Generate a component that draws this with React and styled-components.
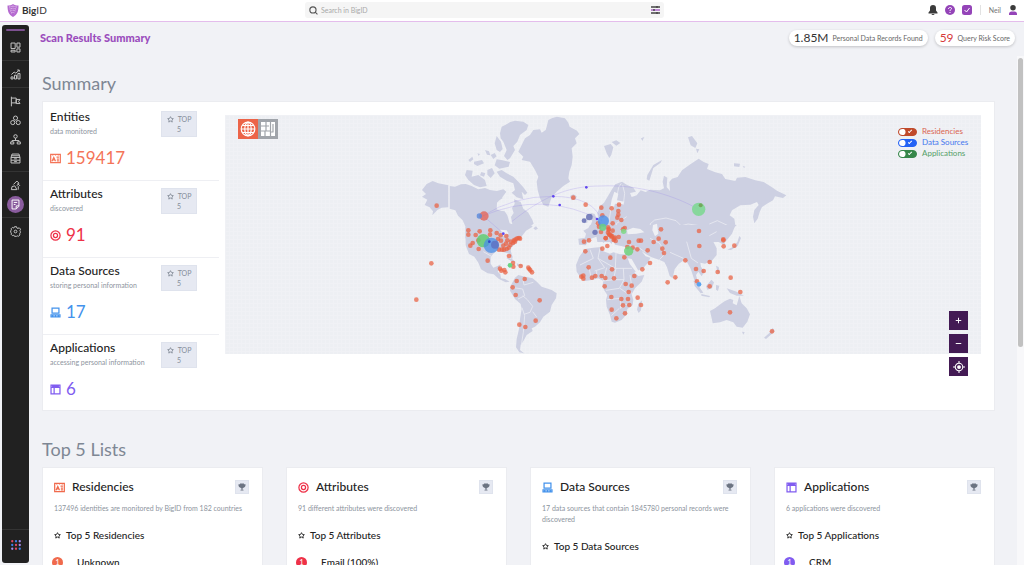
import React, { useState } from "react"
import styled, { createGlobalStyle } from "styled-components"

const GlobalStyle = createGlobalStyle`
    *, *::before, *::after {
        box-sizing: border-box;
    }

    body {
        margin: 0;
        background: #f1f2f6;
        color: #222;
        font-family: Lato, "Open Sans", sans-serif;
        font-size: 10px;
    }

    button, input {
        margin: 0;
        padding: 0;
        border: 0;
        font: inherit;
        color: inherit;
        background: none;
    }

    h1, h2, h3, h4, p, ul, ol {
        margin: 0;
        padding: 0;
        font-weight: 400;
        list-style: none;
    }

    svg {
        display: block;
        flex: none;
    }
`

const StyledPage = styled.div`
    height: 100vh;
    display: flex;
    flex-direction: column;
    overflow: hidden;
`

/* ---------- header ---------- */

const StyledHeader = styled.header`
    flex: none;
    height: 22px;
    padding: 0 7px 1px;
    display: grid;
    grid-template-columns: 59fr 71fr 70fr;
    align-items: center;
    background: #fff;
    border-bottom: 1px solid #e4bdec;
`

const StyledLogo = styled.a`
    display: flex;
    align-items: center;
    gap: 3px;
    color: #333;
    font-size: 10px;
    line-height: 14px;
    text-decoration: none;
`

const StyledSearch = styled.label`
    display: flex;
    align-items: center;
    gap: 3px;
    height: 16px;
    padding: 0 4px;
    border-radius: 3px;
    background: #f5f5f5;
    color: #555;

    input {
        flex: 1;
        min-width: 0;
        font-size: 7px;
        outline: none;
    }

    input::placeholder {
        color: #a9a9a9;
    }
`

const StyledTools = styled.div`
    display: flex;
    justify-content: flex-end;
    align-items: center;
    gap: 7px;
`

const StyledUser = styled.button`
    display: flex;
    align-items: center;
    gap: 8px;
    padding-left: 8px;
    margin-left: 1px;
    border-left: 1px solid #e2e2e2;
    color: #777;
    font-size: 7px;
    line-height: 10px;
`

/* ---------- side navigation ---------- */

const StyledBody = styled.div`
    flex: 1;
    min-height: 0;
    display: flex;
`

const StyledNav = styled.nav`
    flex: none;
    width: 27px;
    margin: 3px 0 2px 2px;
    padding-top: 4px;
    display: flex;
    flex-direction: column;
    border-radius: 3px;
    background: #212121;

    &::before {
        content: "";
        height: 2px;
        margin: 0 4px 3px;
        border-radius: 1px;
        background: #7d5191;
    }
`

const StyledNavGroup = styled.div`
    padding: 4px 0 3px;
    border-bottom: ${({ $last }) => ($last ? "0" : "1px solid #343434")};
`

const StyledNavFooter = styled.div`
    margin-top: auto;
    height: 34px;
    padding-bottom: 4px;
    display: grid;
    place-items: center;
    border-top: 1px solid #343434;
`

const StyledNavButton = styled.button`
    width: 27px;
    height: 19px;
    display: grid;
    place-items: center;
    color: #c9c9c9;

    span {
        width: 17px;
        height: 17px;
        display: grid;
        place-items: center;
        border-radius: 50%;
        color: ${({ $active }) => ($active ? "#fff" : "inherit")};
        background: ${({ $active }) => ($active ? "#8a5c9e" : "none")};
    }
`

/* ---------- main area ---------- */

const StyledMain = styled.main`
    flex: 1;
    min-width: 0;
    display: flex;
    flex-direction: column;
`

const StyledTitleBar = styled.div`
    flex: none;
    height: 34px;
    padding: 0 9px 2px 11px;
    display: flex;
    align-items: center;
    gap: 7px;

    h1 {
        flex: 1;
        color: #9b4dbd;
        font-size: 11px;
        line-height: 14px;
        font-weight: 900;
    }
`

const StyledPill = styled.div`
    height: 16px;
    padding: 0 5px;
    display: flex;
    align-items: center;
    gap: 4px;
    border-radius: 8px;
    background: #fff;
    box-shadow: 0 1px 3px rgba(0, 0, 0, .2);
    color: #666;
    font-size: 7px;

    strong {
        font-size: 12px;
        line-height: 16px;
        font-weight: 400;
        color: ${({ $color }) => $color};
    }
`

const StyledScroll = styled.div`
    flex: 1;
    min-height: 0;
    display: flex;
    overflow: hidden;
`

const StyledContent = styled.div`
    flex: 1;
    min-width: 0;
    padding: 16px 22px 0 13px;
`

const StyledTrack = styled.div`
    flex: none;
    width: 7px;
    padding: 2px 1px 0;
    background: #f8f8fa;

    &::before {
        content: "";
        display: block;
        height: 57%;
        border-radius: 3px;
        background: #c1c1c1;
    }
`

const StyledHeading = styled.h2`
    margin-bottom: 7px;
    color: #7e8794;
    font-size: 18px;
    line-height: 22px;
`

const StyledSummary = styled.section`
    display: flex;
    gap: 6px;
    padding: 2px 13px 0 0;
    margin-bottom: 27px;
    background: #fff;
    border: 1px solid #ebecf0;
`

const StyledStats = styled.ul`
    flex: none;
    width: 176px;
`

const StyledStat = styled.li`
    height: 77px;
    padding: 5px 22px 0 7px;
    display: flex;
    justify-content: space-between;
    border-bottom: 1px solid #eeeff3;

    &:last-child {
        height: 75px;
        border-bottom: 0;
    }

    h3 {
        font-size: 12px;
        line-height: 16px;
        font-weight: 500;
    }

    p {
        color: #8d949e;
        font-size: 7px;
        line-height: 12px;
        white-space: nowrap;
    }
`

const StyledFigure = styled.div`
    margin-top: 11px;
    display: flex;
    align-items: center;
    gap: 5px;
    color: ${({ $color }) => $color};
    font-size: 17px;
    line-height: 20px;
`

const StyledTopButton = styled.button`
    width: 36px;
    height: 26px;
    margin-top: 2px;
    border: 1px solid #dfe3ed;
    background: #e6e9f2;
    color: #858d99;
    font-size: 7px;
    line-height: 10px;
    text-align: center;

    svg {
        display: inline-block;
        margin-right: 4px;
        vertical-align: -1px;
    }
`

/* ---------- map ---------- */

const StyledMap = styled.div`
    position: relative;
    flex: 1;
    min-width: 0;
    margin-top: 11px;
    align-self: flex-start;
    background-color: #edeff3;
    background-image:
        linear-gradient(#f0f1f5 1px, transparent 1px),
        linear-gradient(90deg, #f0f1f5 1px, transparent 1px);
    background-size: 4px 4px;

    > svg {
        width: 100%;
        height: auto;
    }
`

const StyledViews = styled.div`
    position: absolute;
    top: 4px;
    left: 13px;
    display: flex;
`

const StyledView = styled.button`
    width: 20px;
    height: 20px;
    display: grid;
    place-items: center;
    color: #fff;
    background: ${({ $active }) => ($active ? "#ec6448" : "#a0a4aa")};
`

const StyledLegend = styled.div`
    position: absolute;
    top: 11px;
    right: 11px;
    width: 72px;
`

const StyledToggle = styled.label`
    height: 11px;
    display: flex;
    align-items: center;
    gap: 5px;
    color: ${({ $text }) => $text};
    font-size: 8px;
    line-height: 11px;
    white-space: nowrap;

    input {
        appearance: none;
        flex: none;
        width: 19px;
        height: 8px;
        border: 1px solid ${({ $color }) => $color};
        border-radius: 4px;
        background:
            radial-gradient(circle at 3px 3px, #fff 3px, transparent 4px),
            ${({ $color }) => $color};
    }

    input:checked::after {
        content: "";
        display: block;
        width: 4px;
        height: 2px;
        margin: 1px 0 0 9px;
        border: solid #fff;
        border-width: 0 0 1px 1px;
        transform: rotate(-45deg);
    }
`

const StyledZoom = styled.div`
    position: absolute;
    top: 196px;
    right: 13px;
    display: grid;
    gap: 4px;
`

const StyledZoomButton = styled.button`
    width: 19px;
    height: 19px;
    display: grid;
    place-items: center;
    color: #fff;
    background: #431a54;
`

/* ---------- top 5 lists ---------- */

const StyledLists = styled.section`
    display: grid;
    grid-template-columns: repeat(4, 1fr);
    gap: 23px;
`

const StyledCard = styled.article`
    padding: 11px 13px 20px 11px;
    background: #fff;
    border: 1px solid #ebecf0;

    header {
        display: flex;
        align-items: center;
        gap: 7px;
        height: 16px;
        color: ${({ $color }) => $color};
    }

    h3 {
        flex: 1;
        color: #222;
        font-size: 12px;
        line-height: 16px;
        font-weight: 500;
    }

    p {
        margin-top: 8px;
        color: #8d949e;
        font-size: 7px;
        line-height: 11px;
    }

    h4 {
        display: flex;
        align-items: center;
        gap: 5px;
        margin-top: 14px;
        font-size: 10px;
        line-height: 14px;
        font-weight: 500;
    }

    li {
        display: flex;
        align-items: center;
        gap: 14px;
        margin: 13px 0 0 -2px;
        font-size: 10px;
        line-height: 14px;
        font-weight: 500;
    }
`

const StyledTrophy = styled.button`
    width: 14px;
    height: 14px;
    display: grid;
    place-items: center;
    border: 1px solid #dfe3ed;
    background: #e6e9f2;
    color: #6c7482;
`

const StyledRank = styled.span`
    width: 11px;
    height: 11px;
    border-radius: 50%;
    background: ${({ $color }) => $color};
    color: #fff;
    font-size: 7px;
    line-height: 11px;
    text-align: center;
`

/* ---------- icons ---------- */

const iconShapes = {
    search: <><circle cx="7" cy="7" r="5.500" /><path d="M11 11l4 4" /></>,
    grid: <path d="M1.500 1.500h6v8h-6zM10 1.500h4.500v6H10zM1.500 12h6v2.500h-6zM10 10h4.500v4.500H10z" />,
    growth: <><path d="M1.500 14.500v-3h3v3zM6.500 14.500V9h3v5.500zM11.500 14.500v-8h3v8z" /><path d="M2 8l4-3.500 2.500 1.500L13 2M10.500 1.500h3V4" /></>,
    flag: <><path d="M2 1v14M2 3h7v7H2M9 5h5.500l-2 3 2 3H9z" /></>,
    circles: <><circle cx="8" cy="4.500" r="3" /><circle cx="4" cy="11" r="3" /><circle cx="12" cy="11" r="3" /></>,
    network: <><circle cx="8" cy="3.500" r="2.500" /><path d="M8 6v3.500M3 11.500v-2h10v2" /><path d="M1 11.500h4.500v3H1zM10.500 11.500H15v3h-4.500z" /></>,
    catalog: <><path d="M3 1.500h10M2.500 4h11M1.500 6.500h13v8h-13zM1.500 10.500h13M6 8.500h4M6 12.500h4M3 1.500L1.500 6.500M13 1.500l1.500 5" /></>,
    actions: <><path d="M2 14l1-4.500 4-1 3 5.500zM5 6.500l5-5 3 3-3 4M11 5l3.500 3.500M12 9v5" /></>,
    report: <><path d="M3 1.500h10v9l-4 4H3zM5.500 5h5M5.500 8H8M9 14v-4h4" /></>,
    gear: <><circle cx="8" cy="8" r="2" /><path d="M6.500 1h3l.5 2 1.500.6 1.900-1 2 2-1 1.900.6 1.500v2l-1.100 1.400.5 1.600-2 2-1.900-.7L9.500 15h-3l-1-1.700-1.900.7-2-2 .5-1.600L1 9V7l1.100-1.400-.5-1.600 2-2 1.900 1z" /></>,
    id: <><path d="M1 2h14v12H1zM9.500 6H13M10 9h3M10 11.500h3M3 12l2.500-5.500L8 12M4 10h3" /><path d="M4 2v1.500M8 2v1.500M12 2v1.500" /></>,
    target: <><circle cx="8" cy="8" r="6.700" /><circle cx="8" cy="8" r="3" /></>,
    computer: <><path d="M3 1.500h10v7.500H3zM1.500 11.500h13v3h-13zM3 13h2M7 13h2M11 13h2" /></>,
    app: <><path d="M1.500 1.500h13v13h-13zM1.500 5h13M6 5v9.500M3 3.200h10" /></>,
    star: <path d="M8 1.500l2 4 4.500.6-3.300 3.100.8 4.700-4-2.300-4 2.300.8-4.700-3.300-3.100L6 5.500z" />,
    globe: <><circle cx="8" cy="8" r="6.800" /><ellipse cx="8" cy="8" rx="3.200" ry="6.800" /><path d="M8 1.200v13.600M1.200 8h13.600M2.300 4.500h11.400M2.300 11.500h11.400" /></>,
    tree: (
        <>
            <path d="M1 1h14v14H1z" fill="currentColor" stroke="none" />
            <path d="M6 1v9M1 5h8M1 10h9M10.500 1v14M5 10v5M10.500 11h3M13 3v8" stroke="#a0a4aa" />
        </>
    ),
    plus: <path d="M8 4v8M4 8h8" />,
    minus: <path d="M4 8h8" />,
    locate: <><circle cx="8" cy="8" r="5" /><circle cx="8" cy="8" r="1.800" fill="currentColor" /><path d="M8 0v3M8 13v3M0 8h3M13 8h3" /></>,
}

const Icon = ({ name, size = 11, weight = 1.4 }) => (
    <svg width={size} height={size} viewBox="0 0 16 16" fill="none" stroke="currentColor" strokeWidth={weight} aria-hidden="true">
        {iconShapes[name]}
    </svg>
)

const LogoMark = () => (
    <svg width="12" height="13" viewBox="0 0 24 26" aria-hidden="true">
        <path d="M1 3C5 3 9 2 12 0c3 2 7 3 11 3 0 11-2 18-11 23C3 21 1 14 1 3z" fill="#b56bd0" />
        <path d="M4 6c3 0 6-1 8-2 2 1 5 2 8 2M5 10c3 0 5-1 7-2 2 1 4 2 7 2M6 14c2 0 4-1 6-2 2 1 4 2 6 2M8 18c2-.5 3-1 4-2 1 1 2 1.500 4 2" fill="none" stroke="#fff" strokeWidth="1.200" strokeDasharray="2 1" />
    </svg>
)

const FilterIcon = () => (
    <svg width="9" height="8" viewBox="0 0 9 8" strokeWidth="1.400" aria-hidden="true">
        <path d="M0 1h9M0 7h9" stroke="#444" />
        <path d="M0 4h9" stroke="#a55bc4" />
        <path d="M6 0v2M3 3v2M6 6v2" stroke="#444" />
    </svg>
)

const BellIcon = () => (
    <svg width="10" height="10" viewBox="0 0 20 20" fill="#3b3b3b" aria-hidden="true">
        <path d="M10 0a6 6 0 0 0-6 6v5l-3 4v2h18v-2l-3-4V6a6 6 0 0 0-6-6zM7 18h6a3 2 0 0 1-6 0z" />
    </svg>
)

const HelpIcon = () => (
    <svg width="10" height="10" viewBox="0 0 20 20" fill="none" stroke="#fff" strokeWidth="2" aria-hidden="true">
        <circle cx="10" cy="10" r="10" fill="#9444b8" stroke="none" />
        <path d="M7 8c0-4 6-4 6-1 0 2-3 2-3 5M10 14v2" />
    </svg>
)

const TaskIcon = () => (
    <svg width="10" height="10" viewBox="0 0 20 20" aria-hidden="true">
        <rect width="20" height="20" rx="5" fill="#9444b8" />
        <path d="M5 10l4 4 6-8" fill="none" stroke="#fff" strokeWidth="2" />
    </svg>
)

const UserIcon = () => (
    <svg width="8" height="10" viewBox="0 0 16 20" aria-hidden="true">
        <circle cx="8" cy="5.500" r="5.500" fill="#3b3b3b" />
        <path d="M0 20v-2c0-3 2-5 5-5h6c3 0 5 2 5 5v2z" fill="#9444b8" />
    </svg>
)

const TrophyIcon = () => (
    <svg width="8" height="8" viewBox="0 0 16 16" fill="currentColor" aria-hidden="true">
        <path d="M4 1h8v1.500h3c.5 4-1 6-4 7L9 11v2.500h2V15H5v-1.500h2V11L5 9.500c-3-1-4.500-3-4-7h3z" />
    </svg>
)

const dotColors = ["#e14a63", "#3b82e8", "#a78bf0", "#3b82e8", "#e14a63", "#a78bf0", "#a78bf0", "#e14a63", "#3b82e8"]

const AppsIcon = () => (
    <svg width="10" height="10" viewBox="0 0 20 20" aria-hidden="true">
        {dotColors.map((color, i) => (
            <circle key={i} cx={2.5 + (i % 3) * 7.5} cy={2.5 + Math.floor(i / 3) * 7.5} r="2.300" fill={color} />
        ))}
    </svg>
)

/* ---------- world map drawing ---------- */

const northAmerica = [
    "M66 240l14-18 18-9 17 7 30 6v66l-20 1-12 6-16 17 2-12-10-12-15-7 8-16-16-9 12-8z",
    "M149 228l16 2 18-7 14-1 18 6 20 10 20-4 15 6 20 3 20-5 9 7-12 17-16 16-1 20 12 4 12 2 8 12 7 24 8 3-4-22 8-12-5-15 8-12-2-14 20 8 8 20 14 11 13 22 4 12-18 13-24 5 13 8-20 4-10 14H196l2-32-10-22-14-14-8-16-17-5z",
    "M300 70l5-20 12-6 14-8 14-4 25 3 15 10-5 15-20 15-8 20-12 13 5 12-15 25-8 5-10-12 8-18-10-25-8-10z",
    "M290 78l13 17 5 22-8 9-10-6-6-20z",
    "M200 180l18 2-3 18 20-5 20 15 5 18-20 4-18-7-17-15-10-15z",
    "M305 180l15 10 20 10 15 15 15 17 12 16-7 7-10-10 5 23-20-6-15-14 10-8-5-20-20-8-20-12-10-15z",
    "M205 150l12-10 3 8-10 8zM222 155l24-5 6 10-20 8-10-6zM255 120l12 4 4 12-10-2zM272 135l12-6 6 10-10 8zM290 148l14 2 26 6-4 14-28 6-14-10zM262 180l14-6 8 16-12 14-10-10zM232 130l8 2-4 6zM244 186l12 4-4 10-12-4zM286 262l10-6 12 8-14 10z",
    "M440 50l5-20 12-6 14-4 24 5 10 13 4 12 22 12 7 10-13 13 5 15-15 15 3 25-3 25-7 20-3 20 5 10-20 13-20 17-15 17-10 28-15-5-10-20-7-25-3-25 5-15-10-20-15-25-25-5 5-10-15-15 10-20 10-20 15-10 10-15 20-2 5 10 12-8z",
    "M510 258l10-5 10 6-3 9-12 3zM400 355l8-6 6 7-8 4zM572 308l12 4 9 20-4 12-18 3 6-14-8-10zM553 326l10-2-1 14-10 2z",
]

const southAmerica = [
    "M196 5h172l10 2 15-6 5 4-20 12-12 16-12 14-12 12-10 12 1 10 5 15-2 8-8-18-16-4-22-4-10 8-8 10v20l8 12 14-6 8-4-3 12-6 10 8 8 2 12 12 2 14 8-12 2-20-10-16-14-18-3-20-12-8-20-12-18-16-8-10-26z",
    "M345 158l10-8 20 5 23 5 14 12 13 13 30 10 15 10-2 15-13 20-5 20-20 15-10 17-15 13-10 5 3 8-18 12-8 15-10 15-2 15 12 10-14-3-10-15 2-25 7-30 3-30 5-30-3-15-17-15-15-25 2-15z",
    "M318 98l18 4 12 10-14-3zM350 115l14 4 6 5-18-1z",
]

const northEurasia = [
    "M22 310l8-22 12-10 12-20 12-20 10-15 20-8 14 9 20 9 8 12-18 4 5 12 15-5 12-15 15 5 13-7 30 2 12-6-4-20 4-18 10 6-2 28 10 12-2-27 8-10 17-5 13-20 25-18 25-17 15 10 15 6-5 15 25 10 20 5 10 15 30 6 5-10 25-2 30 10 25 5 25 16 15 10 28 14-10 8-24-5-6 12-18 10-15 10-7 15-6 20-10 14-4-20 4-20 13-15-5-9-20 8-30 2-25 15-7 15 14 10 3 20-10 25-20 25H22l-4-25 14-16-4-14z",
    "M42 108l20-6 8 10-6 22-6 10-8-14zM65 96l14-5 12 8-12 8zM153 85l10-4-6 12zM294 82l12-4 16 22-6 14-14-8zM318 116l10 2-6 12zM172 195l18-30 26-15-4 8-22 16-12 38-8-4zM432 160l18 1-2 10-16-2zM458 168l8 2-4 4z",
]

const southEurasia = [
    "M60 0h440l-25 25-13 15 3 20-10-4-10-6-15 0 10 20v20l-15 18-20 8-14-3 2 12 10 15-8 14-10-14-7 10 4 15 10 16-6 2-12-14-6-20-6-18-10-18-10-8-16 12-12 16-6 27-9-7-8-26-8-16-14-6-24-8-14-8-16-10 12 15 14 4-6 14-14 16-24 12-10 2-10-25-14-24 6-14v-12l-16-4-18-4-6-14-4 12-8-8-8-14-8 20-8-16-14-4-20 8-12 18-20-2-2-18 20-3 3-12-8-9 15-8z",
    "M45 72l25-4 25-2 3 12 22 8 10-4 20 6h18l4 12 13 25 10 20 10 8 18-3-8 20-20 20-10 18 5 17-2 15-16 12-2 16-15 17-20 8-10-3-5-20-10-25-2-20 4-15-10-15-4-15 2-12-15-8-20 5-20 3-15-13-10-15-2-20 10-25z",
    "M205 236l11-10-3 30-7 8-5-10zM420 258l15-8 20-15 10-7 15-7 10 4-2 10 12 6 8-28 7 22 15 15 10 18-8 22-14 18-18-3-10-13-20-7-20 7-22 3-3-15zM516 320l8 1-4 8zM608 308l6 10-8 8-18 16-6-4 16-14z",
    "M370 166l18 20 12 17-8 2-18-22zM394 207l26 6-2 4-24-5zM408 184l16-20 8 8-6 18-14 4zM438 180l10 2-4 16-6-4zM470 190l30 10 22 12-22 0-20-8zM438 122l8 4 4 20-8-6zM472 74l18-9 12-14 6-18 5 6-10 24-20 12zM316 152l4 10-5 2z",
]

const borders = [
    "M147 226v68",
]
const southBorders = [
    "M368 212l14 12 16 20-8 18-18 6M340 188l28 4 6 20-20 10M368 160l4 20 28-8M366 248l8 24-4 50-6 38M398 260l12 16M250 80l28 16",
]
const northBorders = [
    "M180 342l14-12 34-6 30 8 16 16-12 14-40 4-34-10zM264 350l30-8 40 6 24 10-6 18-40 8-40-14zM358 342l24-10 30 14M80 262l6-30 8-12M98 226l6 24-4 34M110 320l-30 20-10 30M64 290l-8 50",
]
const southEastBorders = [
    "M60 74l10 26-40 20M90 70l-6 30 20 28-30 10M84 100l52 30 2-46M136 130h50M56 122l8 40M80 138v22M110 128l-10 40 30-4 8-34M160 130l2 34-30 0M108 196l40-6 14-26M112 224l40-4 0 30M150 190l20 14 16 0M150 250l20-12M124 272l24-22M180 150l6 40M240 40l28 14 20 30-20 20M300 82l36 16 14 8M180 60l30 10 16 12M350 50l14 50 20 14M440 20l-22 12",
]

const outlets = {
    north: [[110, 287], [520, 263], [557, 284], [205, 361], [205, 374], [227, 375], [239, 364], [271, 361], [290, 369], [302, 376], [319, 378], [270, 374]],
    americas: [
        [94, 115], [49, 224], [211, 62], [218, 54], [236, 72],
        [235, 46], [263, 107], [303, 47], [310, 62], [297, 74], [322, 46], [318, 56], [312, 74], [326, 68], [331, 60], [333, 50], [339, 54], [342, 46], [347, 43],
        [352, 40], [357, 39], [360, 41], [345, 50], [320, 72], [327, 93], [339, 114], [340, 125], [362, 123], [300, 131], [304, 137], [313, 135], [316, 142], [385, 128],
        [388, 132], [391, 136], [396, 142], [350, 168], [374, 162], [338, 187], [347, 210], [419, 226], [358, 299], [376, 306], [407, 287], [294, 42], [306, 74],
    ],
    eurasia: [
        [34, 293], [65, 295], [87, 284], [85, 303], [85, 314], [82, 323], [94, 330], [68, 340], [24, 340], [27, 350], [54, 352], [56, 360], [54, 368], [68, 362],
        [33, 366], [47, 384], [58, 374], [64, 380], [72, 386], [86, 381], [99, 358], [104, 354], [213, 358], [206, 386], [327, 363], [400, 388], [37, 316],
    ],
    south: [
        [42, 50], [57, 46], [46, 79], [107, 40], [112, 63], [97, 71], [121, 98], [56, 127], [126, 133], [34, 155], [40, 152], [40, 161], [66, 158], [76, 153],
        [95, 153], [106, 159], [132, 160], [104, 184], [124, 216], [154, 222], [174, 222], [159, 241], [178, 240], [125, 254], [165, 265], [139, 280], [213, 240],
        [203, 218], [176, 201], [167, 177], [185, 182], [193, 153], [217, 133], [240, 114], [163, 97], [177, 51], [206, 47], [213, 47], [202, 73], [188, 68], [172, 66],
        [233, 76], [251, 51], [287, 52], [277, 71], [282, 84], [346, 106], [316, 157], [293, 172], [388, 63], [419, 111], [378, 132], [401, 138], [443, 141],
        [482, 158], [460, 46], [461, 64], [493, 62], [381, 169], [419, 184], [511, 201], [480, 262], [606, 319], [131, 45], [137, 48], [135, 38],
        [122, 31], [126, 33], [116, 12], [118, 28],
    ],
}

const Outlets = ({ points }) => points.map(([x, y], i) => (
    <circle key={i} cx={x} cy={y} r="7" fill="#ea6244" fillOpacity=".74" />
))

const Land = ({ shapes, lines }) => (
    <>
        <path d={shapes.join("")} fill="#cdd0e2" />
        <path d={lines.join("")} fill="none" stroke="#e9eaf2" strokeWidth="2.500" strokeLinejoin="round" />
    </>
)

const WorldMap = () => (
    <svg viewBox="0 0 2268 717" role="img" aria-label="World map of residencies, data sources and applications">
        <g transform="translate(1095 -15)"><Land shapes={northEurasia} lines={northBorders} /></g>
        <g transform="translate(1035 330)"><Land shapes={southEurasia} lines={southEastBorders} /></g>
        <g transform="translate(525 330)"><Land shapes={southAmerica} lines={southBorders} /></g>
        <g transform="translate(525 -15)"><Land shapes={northAmerica} lines={borders} /></g>
        {/* water inside the continents */}
        <g fill="#eff0f4">
            <path d="M1206 346l18-8 22 4 12 10-24 4-26 2zM1284 330l12-4 4 30-10 8-8-18zM1160 254l8-24 12 6-4 20 22 4-4 8-24-2-6 20-10 2z" />
            <path d="M1208 430l12 2 24 42-4 6-26-34zM825 344l20 2 6 10-16 6z" />
        </g>
        <g transform="translate(525 -15)" fill="none" stroke="#8f7be8" strokeOpacity=".35" strokeWidth="2">
            <path d="M248 318Q340 258 460 259T606 332M248 318Q430 240 606 332M335 335C440 250 520 228 600 228C720 222 830 260 896 298M250 318L310 370" />
        </g>
        <g transform="translate(525 -15)">
            <Outlets points={outlets.north} />
            <circle cx="252" cy="318" r="14" fill="#e4655a" fillOpacity=".8" />
            <circle cx="238" cy="318" r="8" fill="#5788dc" fillOpacity=".8" />
            <g fill="#6670b4" fillOpacity=".85">
                <circle cx="568" cy="321" r="10" />
                <circle cx="552" cy="332" r="7" />
                <circle cx="585" cy="367" r="8" />
            </g>
            <g fill="#5f45ee">
                <circle cx="460" cy="259" r="4" />
                <circle cx="479" cy="285" r="4" />
                <circle cx="559" cy="232" r="4" />
                <circle cx="591" cy="327" r="4" />
                <circle cx="310" cy="371" r="4" />
            </g>
        </g>
        <g transform="translate(525 330)">
            <Outlets points={outlets.americas} />
            <circle cx="250" cy="47" r="20" fill="#62cc72" fillOpacity=".85" />
            <circle cx="274" cy="61" r="23" fill="#4a8fe6" fillOpacity=".75" />
            <circle cx="285" cy="59" r="12" fill="#5960b4" fillOpacity=".6" />
            <circle cx="268" cy="50" r="4" fill="#3049c8" />
            <circle cx="330" cy="121" r="7" fill="#6bd483" />
        </g>
        <g transform="translate(1095 -15)">
            <Outlets points={outlets.eurasia} />
            <circle cx="40" cy="333" r="17" fill="#4a90ea" fillOpacity=".8" />
            <circle cx="38" cy="352" r="11" fill="#68cf83" fillOpacity=".85" />
            <circle cx="101" cy="364" r="8" fill="#7ddb86" fillOpacity=".85" />
            <circle cx="326" cy="298" r="20" fill="#7fd795" fillOpacity=".9" />
            <circle cx="332" cy="286" r="6" fill="#71a95c" />
        </g>
        <g transform="translate(1035 330)">
            <Outlets points={outlets.south} />
            <circle cx="176" cy="78" r="14" fill="#70d47c" fillOpacity=".85" />
            <circle cx="387" cy="178" r="7" fill="#5aa4f0" />
        </g>
    </svg>
)

/* ---------- page ---------- */

const navGroups = [
    ["grid"],
    ["growth"],
    ["flag", "circles", "network", "catalog"],
    ["actions", "report"],
    ["gear"],
]

const stats = [
    { title: "Entities", note: "data monitored", value: "159417", icon: "id", color: "#f47458" },
    { title: "Attributes", note: "discovered", value: "91", icon: "target", color: "#ee3148" },
    { title: "Data Sources", note: "storing personal information", value: "17", icon: "computer", color: "#4392ec" },
    { title: "Applications", note: "accessing personal information", value: "6", icon: "app", color: "#805cf0" },
]

const lists = [
    { title: "Residencies", note: "137496 identities are monitored by BigID from 182 countries", first: "Unknown", icon: "id", color: "#f06a4c" },
    { title: "Attributes", note: "91 different attributes were discovered", first: "Email (100%)", icon: "target", color: "#ee3148" },
    { title: "Data Sources", note: "17 data sources that contain 1845780 personal records were discovered", icon: "computer", color: "#4392ec" },
    { title: "Applications", note: "6 applications were discovered", first: "CRM", icon: "app", color: "#805cf0" },
]

const layers = [
    { name: "Residencies", color: "#c04a2b", text: "#da6550" },
    { name: "Data Sources", color: "#2463f5", text: "#4477ee" },
    { name: "Applications", color: "#36874a", text: "#55a068" },
]

const Header = () => (
    <StyledHeader>
        <StyledLogo href="#home">
            <LogoMark />
            <span><b>Big</b>ID</span>
        </StyledLogo>
        <StyledSearch>
            <Icon name="search" size={9} weight={2} />
            <input type="text" placeholder="Search in BigID" aria-label="Search in BigID" />
            <button type="button" aria-label="Filters"><FilterIcon /></button>
        </StyledSearch>
        <StyledTools>
            <button type="button" aria-label="Notifications"><BellIcon /></button>
            <button type="button" aria-label="Help"><HelpIcon /></button>
            <button type="button" aria-label="Tasks"><TaskIcon /></button>
            <StyledUser type="button">Neil<UserIcon /></StyledUser>
        </StyledTools>
    </StyledHeader>
)

const Nav = () => (
    <StyledNav>
        {navGroups.map((group, i) => (
            <StyledNavGroup key={i} $last={i === navGroups.length - 1}>
                {group.map(name => (
                    <StyledNavButton key={name} type="button" aria-label={name} $active={name === "report"}>
                        <span><Icon name={name} /></span>
                    </StyledNavButton>
                ))}
            </StyledNavGroup>
        ))}
        <StyledNavFooter>
            <button type="button" aria-label="Apps"><AppsIcon /></button>
        </StyledNavFooter>
    </StyledNav>
)

const MapPanel = () => {
    const [view, setView] = useState("globe")

    return (
        <StyledMap>
            <WorldMap />
            <StyledViews>
                {["globe", "tree"].map(name => (
                    <StyledView key={name} type="button" aria-label={name} $active={view === name} onClick={() => setView(name)}>
                        <Icon name={name} size={16} weight={1.2} />
                    </StyledView>
                ))}
            </StyledViews>
            <StyledLegend>
                {layers.map(({ name, color, text }) => (
                    <StyledToggle key={name} $color={color} $text={text}>
                        <input type="checkbox" defaultChecked />
                        {name}
                    </StyledToggle>
                ))}
            </StyledLegend>
            <StyledZoom>
                <StyledZoomButton type="button" aria-label="Zoom in"><Icon name="plus" /></StyledZoomButton>
                <StyledZoomButton type="button" aria-label="Zoom out"><Icon name="minus" /></StyledZoomButton>
                <StyledZoomButton type="button" aria-label="Reset position"><Icon name="locate" size={12} /></StyledZoomButton>
            </StyledZoom>
        </StyledMap>
    )
}

const App = () => (
    <StyledPage>
        <GlobalStyle />
        <Header />
        <StyledBody>
            <Nav />
            <StyledMain>
                <StyledTitleBar>
                    <h1>Scan Results Summary</h1>
                    <StyledPill $color="#333"><strong>1.85M</strong> Personal Data Records Found</StyledPill>
                    <StyledPill $color="#d63a3a"><strong>59</strong> Query Risk Score</StyledPill>
                </StyledTitleBar>
                <StyledScroll>
                    <StyledContent>
                        <StyledHeading>Summary</StyledHeading>
                        <StyledSummary>
                            <StyledStats>
                                {stats.map(({ title, note, value, icon, color }) => (
                                    <StyledStat key={title}>
                                        <div>
                                            <h3>{title}</h3>
                                            <p>{note}</p>
                                            <StyledFigure $color={color}><Icon name={icon} weight={1.8} />{value}</StyledFigure>
                                        </div>
                                        <StyledTopButton type="button"><Icon name="star" size={7} weight={2} />TOP<br />5</StyledTopButton>
                                    </StyledStat>
                                ))}
                            </StyledStats>
                            <MapPanel />
                        </StyledSummary>
                        <StyledHeading>Top 5 Lists</StyledHeading>
                        <StyledLists>
                            {lists.map(({ title, note, first, icon, color }) => (
                                <StyledCard key={title} $color={color}>
                                    <header>
                                        <Icon name={icon} weight={1.8} />
                                        <h3>{title}</h3>
                                        <StyledTrophy type="button" aria-label={`Top ${title}`}><TrophyIcon /></StyledTrophy>
                                    </header>
                                    <p>{note}</p>
                                    <h4><Icon name="star" size={7} weight={2} />Top 5 {title}</h4>
                                    {first && (
                                        <ol>
                                            <li><StyledRank $color={color}>1</StyledRank>{first}</li>
                                        </ol>
                                    )}
                                </StyledCard>
                            ))}
                        </StyledLists>
                    </StyledContent>
                    <StyledTrack />
                </StyledScroll>
            </StyledMain>
        </StyledBody>
    </StyledPage>
)

export default App
